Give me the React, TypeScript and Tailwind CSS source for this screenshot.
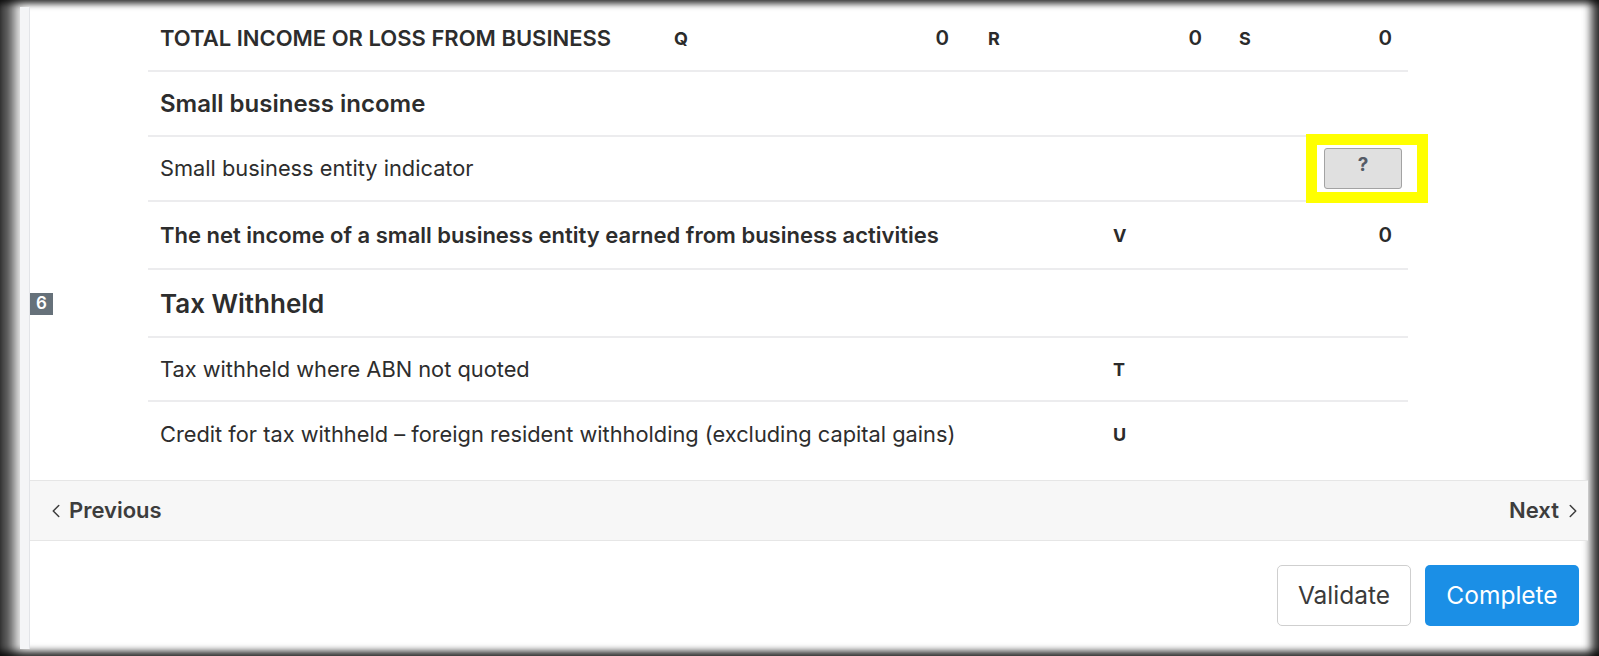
import { ChevronLeft, ChevronRight } from 'lucide-react'

type RowProps = {
  h: string
  badge?: string
  last?: boolean
  children: React.ReactNode
}

function Row({ h, badge, last, children }: RowProps) {
  return (
    <div className={`flex ${h}`}>
      <div className="w-[118px] shrink-0 flex items-center">
        {badge && (
          <span className="w-[23px] h-[22px] bg-[#66717a] text-white text-[17px] font-semibold flex items-center justify-center">
            {badge}
          </span>
        )}
      </div>
      <div
        className={`relative flex-1 flex items-center pl-[12px] pr-[16px] ${
          last ? '' : 'border-b-2 border-[#ececee]'
        }`}
      >
        {children}
      </div>
    </div>
  )
}

function Code({ letter, value, w }: { letter: string; value?: string; w: string }) {
  return (
    <div className={`${w} shrink-0 flex items-center justify-between`}>
      <span className="text-[18px] font-bold text-[#2b2b2b]">{letter}</span>
      {value !== undefined && <span className="text-[20.5px] font-semibold text-[#2b2b2b]">{value}</span>}
    </div>
  )
}

export default function App() {
  return (
    <div className="w-[1599px] h-[656px] overflow-hidden bg-white font-['Inter',sans-serif] text-[#2d2d2d] pt-[7px] pl-[20px] pr-[11px] pb-[7px] shadow-[inset_22px_0_14px_-8px_rgba(0,0,0,0.75),inset_0_7px_6px_-3px_rgba(0,0,0,0.7),inset_-12px_0_8px_-4px_rgba(0,0,0,0.75),inset_0_-8px_7px_-3px_rgba(0,0,0,0.75)]">
      <div className="flex h-full">
        <div className="w-[10px] shrink-0 bg-[#f4f5f7] border-r border-[#e2e4e8]" />
        <div className="flex-1 flex flex-col">
          <div className="pr-[180px] pb-[14px]">
            <Row h="h-[65px]">
              <div className="w-[514px] shrink-0 text-[22px] font-semibold">TOTAL INCOME OR LOSS FROM BUSINESS</div>
              <Code letter="Q" value="0" w="w-[275px]" />
              <div className="w-[39px] shrink-0" />
              <Code letter="R" value="0" w="w-[214px]" />
              <div className="w-[37px] shrink-0" />
              <Code letter="S" value="0" w="flex-1" />
            </Row>
            <Row h="h-[65px]">
              <div className="text-[24px] font-semibold">Small business income</div>
            </Row>
            <Row h="h-[65px]">
              <div className="text-[21.8px]">Small business entity indicator</div>
              <div className="absolute right-[-20px] top-[-3px] w-[122px] h-[69px] border-[11px] border-[#ffff00] bg-white">
                <button className="absolute left-[7px] top-[3px] w-[78px] h-[41px] bg-[#e0e0e0] border border-[#a3a3a3] rounded-[3px] flex justify-center pt-[6px] text-[19px] font-bold text-[#555b66] leading-none">
                  ?
                </button>
              </div>
            </Row>
            <Row h="h-[68px]">
              <div className="w-[953px] shrink-0 text-[22px] font-semibold">
                The net income of a small business entity earned from business activities
              </div>
              <Code letter="V" value="0" w="flex-1" />
            </Row>
            <Row h="h-[68px]" badge="6">
              <div className="text-[26px] font-semibold">Tax Withheld</div>
            </Row>
            <Row h="h-[64px]">
              <div className="w-[953px] shrink-0 text-[21.8px]">Tax withheld where ABN not quoted</div>
              <Code letter="T" w="flex-1" />
            </Row>
            <Row h="h-[64px]" last>
              <div className="w-[953px] shrink-0 text-[21.8px]">
                Credit for tax withheld – foreign resident withholding (excluding capital gains)
              </div>
              <Code letter="U" w="flex-1" />
            </Row>
          </div>
          <div className="h-[61px] shrink-0 bg-[#f7f7f7] border-y border-[#e6e6e6] flex items-center justify-between pl-[15px] pr-[4px]">
            <button className="flex items-center gap-[2px] text-[22px] font-semibold text-[#3d3d3d]">
              <ChevronLeft className="w-[22px] h-[22px]" strokeWidth={1.6} />
              Previous
            </button>
            <button className="flex items-center gap-[3px] text-[22px] font-semibold text-[#3d3d3d]">
              Next
              <ChevronRight className="w-[22px] h-[22px]" strokeWidth={1.6} />
            </button>
          </div>
          <div className="flex-1 flex justify-end items-start gap-[14px] pt-[24px] pr-[9px]">
            <button className="w-[134px] h-[61px] bg-white border border-[#cfcfcf] rounded-[5px] text-[24.5px] text-[#3a3a3a]">
              Validate
            </button>
            <button className="w-[154px] h-[61px] bg-[#1b8fe6] rounded-[5px] text-[24.5px] text-white">
              Complete
            </button>
          </div>
        </div>
      </div>
    </div>
  )
}
